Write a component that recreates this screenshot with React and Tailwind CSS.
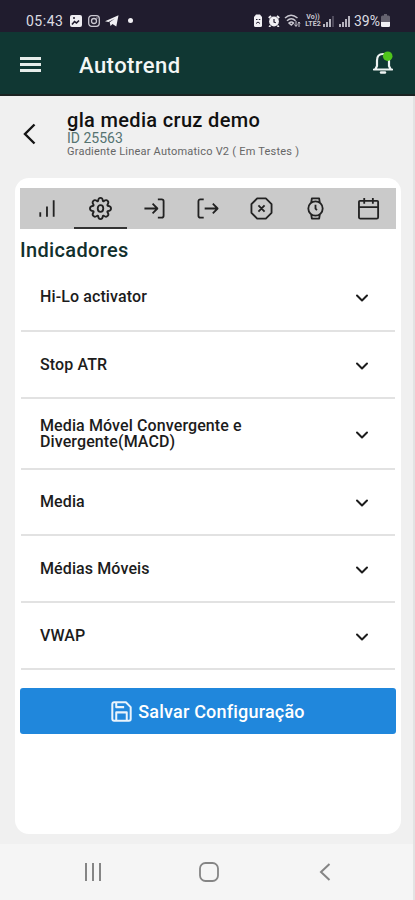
import { useState } from "react"
import { ChevronDown } from "lucide-react"

const indicators = [
  { name: "Hi-Lo activator", height: "h-[69px]" },
  { name: "Stop ATR", height: "h-[67px]" },
  { name: "Media Móvel Convergente e Divergente(MACD)", height: "h-[71px]" },
  { name: "Media", height: "h-[66px]" },
  { name: "Médias Móveis", height: "h-[67px]" },
  { name: "VWAP", height: "h-[67px]" },
]

const tabs = [
  { id: "stats", icon: <path d="M5.500 20.500V16M12.500 20.500V10M19.500 20.500V3.500" /> },
  {
    id: "settings",
    icon: (
      <>
        <path d="M9.500 4.200Q9.700 1 12 1t2.500 3.200l.8.300q2.600-2.100 4.200-.5t-.4 4.300l.3.800Q23 9.500 23 12t-3.600 2.700l-.3.800q2.100 2.600.4 4.300t-4.200-.4l-.8.300Q14.300 23 12 23t-2.500-3.300l-.8-.3q-2.600 2.100-4.200.4t.4-4.300l-.3-.8Q1 14.500 1 12t3.600-2.900l.3-.8Q2.800 5.700 4.500 4t4.200.5z" />
        <ellipse cx="12" cy="12" rx="2.900" ry="3.500" />
      </>
    ),
  },
  { id: "entry", icon: <path d="M15.500 2.500h4a2 2 0 0 1 2 2v15a2 2 0 0 1-2 2h-4M1.500 12H15M10 7l5 5-5 5" /> },
  { id: "exit", icon: <path d="M7 2.500H3.500a2 2 0 0 0-2 2v15a2 2 0 0 0 2 2H7M8 12h13.500M16.500 7l5 5-5 5" /> },
  { id: "stop", icon: <path d="M7.500 1.500h9l6 6v9l-6 6h-9l-6-6v-9zM8.800 8.800l6.400 6.400M15.200 8.800l-6.400 6.400" /> },
  {
    id: "time",
    icon: (
      <>
        <circle cx="12" cy="12" r="7.500" />
        <path d="M7.500 6l.7-4.500h7.600l.7 4.500M7.500 18l.7 4.500h7.600l.7-4.500M12 8v4.200l1.500 1.500" />
      </>
    ),
  },
  { id: "calendar", icon: <path d="M2 4h18a1 1 0 0 1 1 1v16a1.500 1.500 0 0 1-1.500 1.500h-17A1.500 1.500 0 0 1 1 21V5a1 1 0 0 1 1-1zM1 10.500h20M6.500 1v6M15.500 1v6" /> },
]

function SignalBars({ dim }) {
  return (
    <svg className="w-[12px] h-[12px]" viewBox="0 0 12 12" fill="#b5b3bd">
      <path d="M0 9h2v3H0zM3 7h2v5H3zM6 4h2v8H6z" />
      <path d="M9 1h2v11H9z" fill={dim ? "#4e4a5b" : "#b5b3bd"} />
    </svg>
  )
}

function StatusBar() {
  return (
    <div className="h-8 bg-[#201c2e] text-[#dddce2] flex items-center justify-between pl-[26px] pr-[25px] pt-[9px]">
      <div className="flex items-center">
        <span className="text-[14px] leading-none tracking-[0.5px] w-[44px]">05:43</span>
        {/* Gallery */}
        <svg className="w-[12px] h-[12px]" viewBox="0 0 12 12">
          <rect width="12" height="12" rx="2" fill="#eeedf1" />
          <path d="M2 9.500l2.500-3 2 1.500L9 5.500M3 3h2" stroke="#201c2e" strokeWidth="1.600" fill="none" />
        </svg>
        {/* Instagram */}
        <svg className="w-[12px] h-[12px] ml-[6px]" viewBox="0 0 12 12" fill="none" stroke="#c9c7d0" strokeWidth="1.300">
          <rect x=".7" y=".7" width="10.600" height="10.600" rx="3" />
          <circle cx="6" cy="6" r="2.500" />
          <path d="M8.500 3h1" />
        </svg>
        {/* Telegram */}
        <svg className="w-[14px] h-[12px] ml-[5px]" viewBox="0 0 14 12" fill="#f1f0f4">
          <path d="M0 6.300L13.500.3 11.300 11.500 7.500 9 5.500 11 4.700 7.300 10 3.500 3.500 7z" />
        </svg>
        <span className="w-[5px] h-[5px] rounded-full bg-[#f1f0f4] ml-[9px]" />
      </div>
      <div className="flex items-center">
        <svg className="w-[10px] h-[13px]" viewBox="0 0 10 13">
          <path d="M1 3l2-2.500h4L9 3v8.500Q9 13 7.500 13h-5Q1 13 1 11.500z" fill="#f1f0f4" />
          <path d="M3 5.500h1.500M5.800 5.500h1.500M3 9.500l2-1.500 2 1.500" stroke="#201c2e" strokeWidth="1" fill="none" />
        </svg>
        <svg className="w-[12px] h-[12px] ml-[5px]" viewBox="0 0 12 12">
          <circle cx="6" cy="6.500" r="4.900" fill="#f1f0f4" />
          <path d="M.8 3L3 .8M11.200 3L9 .8M2.500 10.500L1.200 12M9.500 10.500l1.300 1.500" stroke="#f1f0f4" strokeWidth="1.800" />
          <path d="M6 4v3l1.800.8" stroke="#201c2e" strokeWidth="1.200" fill="none" />
        </svg>
        <svg className="w-[17px] h-[15px] ml-[4px]" viewBox="0 0 17 15" fill="none" stroke="#c9c7d0" strokeWidth="1.500">
          <path d="M1 5q6-5.500 12.500 0M3 7.700q4.300-4 8.500 0M5 10q2.500-2 4.500 0L7.300 12z" />
          <path d="M12 8v5M10.500 11.500L12 13.500 13.500 11.500M15 14V9M14 10.500l1-1.500 1 1.500" strokeWidth="1" />
        </svg>
        <span className="flex flex-col items-center w-[16px] ml-[4px] text-[7px] leading-[7px] font-bold text-[#c9c7d0]">
          <span>Vo))</span>
          <span>LTE2</span>
        </span>
        <span className="flex gap-[4px] ml-[2px]">
          <SignalBars dim />
          <SignalBars />
        </span>
        <span className="text-[14px] leading-none ml-[3px]">39%</span>
        <svg className="w-[9px] h-[13px] ml-[1px]" viewBox="0 0 9 13">
          <path d="M3 0h3v1.500h1.500Q9 1.500 9 3v8.500Q9 13 7.500 13h-6Q0 13 0 11.500V3Q0 1.500 1.500 1.500H3z" fill="#65626f" />
          <path d="M0 8h9v3.500Q9 13 7.500 13h-6Q0 13 0 11.500z" fill="#f1f0f4" />
        </svg>
      </div>
    </div>
  )
}

function Header() {
  return (
    <header className="h-[64px] bg-[#103733] border-b-2 border-[#1b2322] flex items-center pl-[20px] pr-[22px]">
      <button className="w-[21px] flex flex-col gap-[3px] mt-[2px]">
        <span className="h-[3px] bg-[#e6ecea]" />
        <span className="h-[3px] bg-[#e6ecea]" />
        <span className="h-[3px] bg-[#e6ecea]" />
      </button>
      <h1 className="ml-[38px] mt-[5px] text-[22px] leading-none tracking-[0.450px] font-medium text-[#f3f6f5]">Autotrend</h1>
      <svg className="ml-auto w-[20px] h-[24px]" viewBox="0 0 20 24" fill="none">
        <path d="M1 18.500h18M2.500 18l1.500-3V9.500C4 5 6 3 10 3s6 2 6 6.500V15l1.500 3" stroke="#eef3f2" strokeWidth="2.200" strokeLinecap="round" />
        <path d="M8 21.500h4" stroke="#eef3f2" strokeWidth="2.400" strokeLinecap="round" />
        <circle cx="14.700" cy="5.200" r="4.800" fill="#4fc51c" />
      </svg>
    </header>
  )
}

function RobotTitle() {
  return (
    <div className="h-[82px] flex items-start pt-[14px] pl-[23px]">
      <svg className="w-[13px] h-[22px] mt-[13px]" viewBox="0 0 13 22" fill="none" stroke="#151515" strokeWidth="2.400">
        <path d="M11.500 1.500L2 11l9.500 9.500" />
      </svg>
      <div className="ml-[31px]">
        <h2 className="text-[20px] leading-[21px] tracking-[0.330px] font-medium text-[#111]">gla media cruz demo</h2>
        <p className="text-[14px] leading-[15px] text-[#557371]">ID 25563</p>
        <p className="text-[11px] leading-[12px] tracking-[0.220px] text-[#666]">Gradiente Linear Automatico V2 ( Em Testes )</p>
      </div>
    </div>
  )
}

function NavBar() {
  return (
    <nav className="h-[56px] mt-auto bg-[#f5f5f5] flex items-center pl-[84px] text-[#858585]">
      <svg className="w-[18px] h-[18px]" viewBox="0 0 18 18" stroke="currentColor" strokeWidth="2">
        <path d="M2 0v18M9 0v18M16 0v18" />
      </svg>
      <svg className="w-[20px] h-[20px] ml-[97px]" viewBox="0 0 20 20" fill="none" stroke="currentColor" strokeWidth="1.800">
        <rect x="1" y="1" width="18" height="18" rx="5.500" />
      </svg>
      <svg className="w-[12px] h-[18px] ml-[100px]" viewBox="0 0 12 18" fill="none" stroke="currentColor" strokeWidth="2">
        <path d="M10.500 1L2 9l8.500 8" />
      </svg>
    </nav>
  )
}

export default function App() {
  const [activeTab, setActiveTab] = useState("settings")

  return (
    <div className="w-[415px] h-[900px] flex flex-col overflow-hidden bg-[#f0f0f0] font-['Roboto',sans-serif]">
      <StatusBar />
      <Header />
      <div className="flex-1 flex flex-col border-r-2 border-[#e3e3e3]">
        <RobotTitle />

        <main className="ml-[15px] mr-[12px] h-[656px] px-[5px] pt-[10px] bg-white rounded-[14px]">
          <div className="flex h-[41px] w-[376px] bg-[#cacaca]">
            {tabs.map((tab) => (
              <button
                key={tab.id}
                onClick={() => setActiveTab(tab.id)}
                className={`flex-1 flex items-center justify-center border-b-2 pt-[2px] ${
                  activeTab === tab.id ? "border-[#333]" : "border-transparent"
                }`}
              >
                <svg
                  className="w-[23px] h-[23px] overflow-visible"
                  viewBox="0 0 24 24"
                  fill="none"
                  stroke="#222"
                  strokeWidth="1.900"
                  strokeLinejoin="round"
                >
                  {tab.icon}
                </svg>
              </button>
            ))}
          </div>

          <h3 className="h-[34px] pt-[11px] text-[20px] leading-[21px] tracking-[0.350px] font-medium text-[#12302d]">Indicadores</h3>

          <ul className="ml-[1px] w-[374px]">
            {indicators.map((item) => (
              <li
                key={item.name}
                className={`${item.height} border-b-2 border-[#e2e2e2] flex items-center justify-between pl-[19px] pr-[23px]`}
              >
                <span className="w-[220px] text-[16px] leading-[16px] tracking-[0.110px] font-medium text-[#1c1c1c]">{item.name}</span>
                <ChevronDown className="w-[20px] h-[20px] mt-[2px] text-[#1c1c1c]" strokeWidth={2.400} />
              </li>
            ))}
          </ul>

          <button className="mt-[18px] h-[46px] w-[376px] flex items-center justify-center gap-[6px] rounded-[3px] bg-[#2087dc] text-white">
            <svg className="w-[21px] h-[21px]" viewBox="0 0 24 24" fill="none" stroke="#eaf4fc" strokeWidth="2.300" strokeLinejoin="round">
              <path d="M3.500 1.500h13.500l5.500 5.500v13.500a2 2 0 0 1-2 2h-17a2 2 0 0 1-2-2v-17a2 2 0 0 1 2-2zM6 1.500V7h9M6 22.500V13h12v9.500" />
            </svg>
            <span className="mt-[2px] text-[18px] leading-none tracking-[0.200px] font-medium">Salvar Configuração</span>
          </button>
        </main>

        <NavBar />
      </div>
    </div>
  )
}
